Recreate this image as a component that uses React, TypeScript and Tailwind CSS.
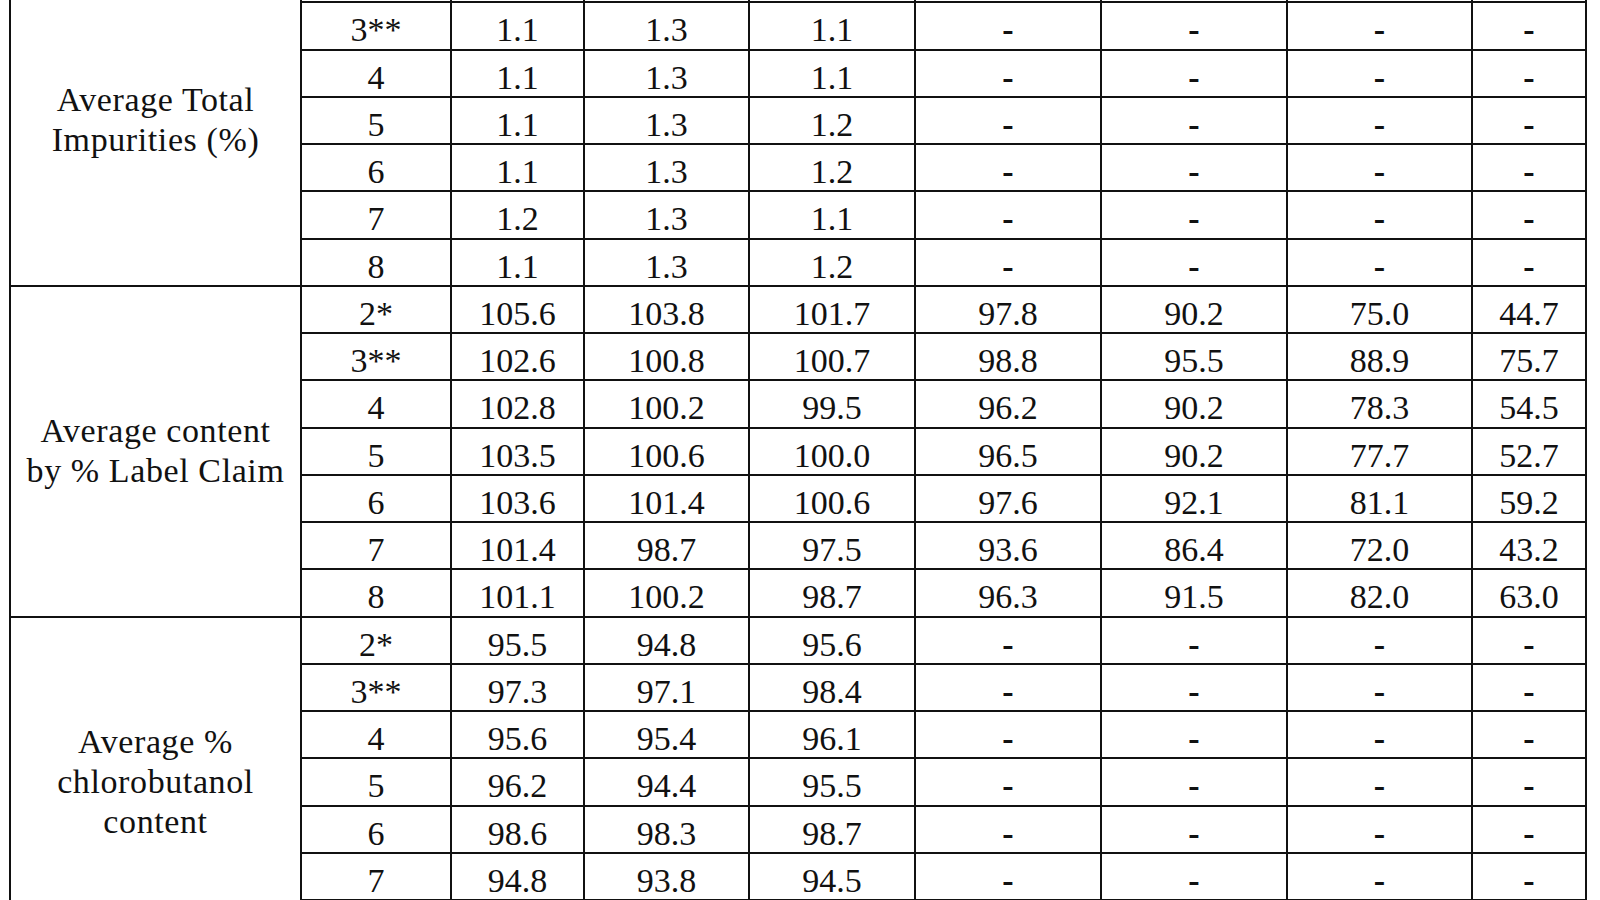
const dash = ["-", "-", "-", "-"];
const blank = ["", "", "", "", "", "", "", ""];

// first row of group 1 and last row of group 3 fall outside the viewport
const groups = [
  {
    label: ["Average Total", "Impurities (%)"],
    rows: [
      blank,
      ["3**", "1.1", "1.3", "1.1", ...dash],
      ["4", "1.1", "1.3", "1.1", ...dash],
      ["5", "1.1", "1.3", "1.2", ...dash],
      ["6", "1.1", "1.3", "1.2", ...dash],
      ["7", "1.2", "1.3", "1.1", ...dash],
      ["8", "1.1", "1.3", "1.2", ...dash],
    ],
  },
  {
    label: ["Average content", "by % Label Claim"],
    rows: [
      ["2*", "105.6", "103.8", "101.7", "97.8", "90.2", "75.0", "44.7"],
      ["3**", "102.6", "100.8", "100.7", "98.8", "95.5", "88.9", "75.7"],
      ["4", "102.8", "100.2", "99.5", "96.2", "90.2", "78.3", "54.5"],
      ["5", "103.5", "100.6", "100.0", "96.5", "90.2", "77.7", "52.7"],
      ["6", "103.6", "101.4", "100.6", "97.6", "92.1", "81.1", "59.2"],
      ["7", "101.4", "98.7", "97.5", "93.6", "86.4", "72.0", "43.2"],
      ["8", "101.1", "100.2", "98.7", "96.3", "91.5", "82.0", "63.0"],
    ],
  },
  {
    label: ["Average %", "chlorobutanol", "content"],
    rows: [
      ["2*", "95.5", "94.8", "95.6", ...dash],
      ["3**", "97.3", "97.1", "98.4", ...dash],
      ["4", "95.6", "95.4", "96.1", ...dash],
      ["5", "96.2", "94.4", "95.5", ...dash],
      ["6", "98.6", "98.3", "98.7", ...dash],
      ["7", "94.8", "93.8", "94.5", ...dash],
      blank,
    ],
  },
];

export default function App() {
  return (
    <div className="h-[900px] w-[1600px] overflow-hidden bg-white">
      <div className="-mt-[46px] ml-[9px] grid w-max grid-cols-[289px_148px_131px_163px_164px_184px_184px_183px_112px] auto-rows-[45.25px] gap-[2px] bg-[#111] p-[2px] font-['Liberation_Serif','Times_New_Roman',serif] text-[34px] text-[#111]">
        {groups.map((g) => (
          <Group key={g.label[0]} label={g.label} rows={g.rows} />
        ))}
      </div>
    </div>
  );
}

function Group({ label, rows }: { label: string[]; rows: string[][] }) {
  return (
    <>
      <div className="col-start-1 row-span-7 flex items-center justify-center bg-white text-center leading-[40px] tracking-[0.6px]">
        <div>
          {label.map((line) => (
            <div key={line}>{line}</div>
          ))}
        </div>
      </div>
      {rows.map((row, i) =>
        row.map((cell, j) => (
          <div
            key={`${i}-${j}`}
            className={`flex items-center justify-center bg-white pt-[9px] leading-none ${cell === "-" ? "font-bold" : ""}`}
          >
            {cell}
          </div>
        ))
      )}
    </>
  );
}
